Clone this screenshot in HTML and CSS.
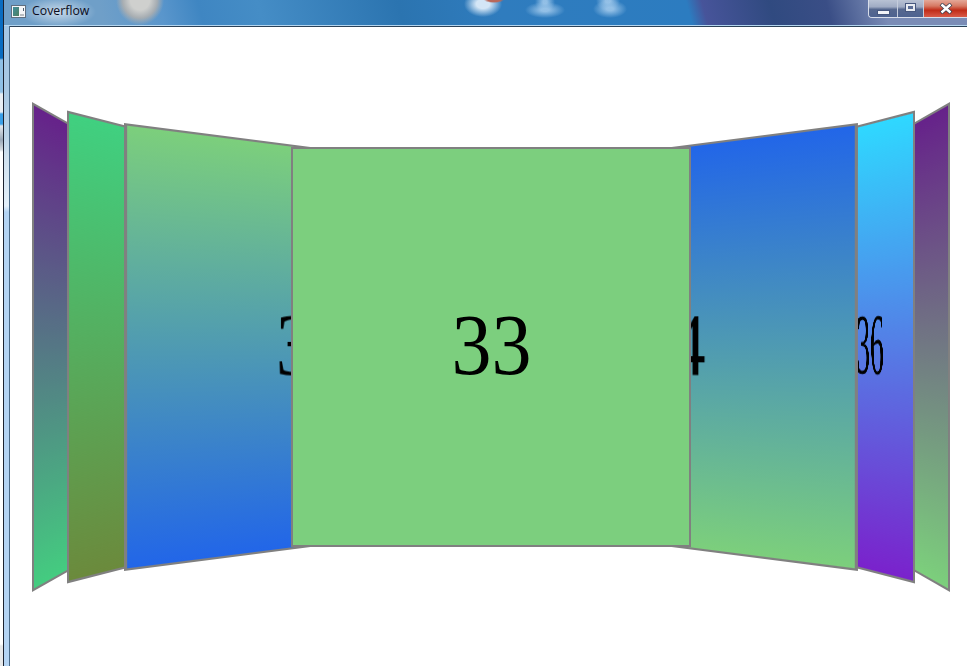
FILE: index.html
```html
<!DOCTYPE html>
<html lang="en">
<head>
    <meta charset="UTF-8">
    <meta name="viewport" content="width=device-width, initial-scale=1.0">
    <title>Coverflow</title>
    <link rel="stylesheet" href="styles.css">
</head>
<body>
    <div class="desktop-sliver"></div>
    <div class="window">
        <div class="titlebar">
            <svg class="title-icon" width="15" height="13" viewBox="0 0 15 13">
                <defs>
                    <linearGradient id="iconFill" x1="0" y1="0" x2="1" y2="1">
                        <stop offset="0" stop-color="#3f8f9f"/>
                        <stop offset="1" stop-color="#4f7f5f"/>
                    </linearGradient>
                </defs>
                <rect x="0.5" y="0.5" width="14" height="12" fill="#f4f6f8" stroke="#5f6f80"/>
                <rect x="2" y="2" width="6" height="9" fill="url(#iconFill)"/>
                <rect x="9" y="9" width="4" height="2" fill="#b8bcc0"/>
                <rect x="12" y="3" width="1" height="3" fill="#50606f"/>
            </svg>
            <span class="title-text">Coverflow</span>
            <div class="window-buttons">
                <div class="win-btn btn-min"><span class="min-glyph"></span></div>
                <div class="win-btn btn-max"><span class="max-glyph"></span></div>
                <div class="win-btn btn-close">
                    <svg width="14" height="11" viewBox="0 0 14 11">
                        <path d="M2 1 L12 10 M12 1 L2 10" stroke="#3a4050" stroke-width="4"/>
                        <path d="M2.500 1.500 L11.500 9.500 M11.500 1.500 L2.500 9.500" stroke="#ffffff" stroke-width="2.400"/>
                    </svg>
                </div>
            </div>
        </div>
        <div class="client">
            <div class="frame-edge"></div>
            <div class="content">
                <div class="cover cover-far-left"></div>
                <div class="cover cover-far-right"></div>
                <div class="cover cover-near-left"></div>
                <div class="cover cover-near-right"><span class="num num-squeezed">36</span></div>
                <div class="cover cover-side-left"><span class="num">32</span></div>
                <div class="cover cover-side-right"><span class="num">34</span></div>
                <div class="cover cover-center"><span class="num">33</span></div>
            </div>
        </div>
    </div>
</body>
</html>
```

FILE: styles.css
```css
html, body {
    margin: 0;
    padding: 0;
    height: 100%;
}
body {
    display: flex;
    overflow: hidden;
    background-color: #fff;
    font-family: "Open Sans", Arial, sans-serif;
}
.desktop-sliver {
    flex: 0 0 3px;
    border-right: 1px solid #1c2230;
    background: linear-gradient(180deg,
        #0a6cc0 0, #0a6cc0 58px, #8fc0e6 60px, #8fc0e6 92px, #e8eef4 94px, #e8eef4 112px,
        #3a9fe8 114px, #3a9fe8 124px, #e4e8ee 126px, #9aa8b8 140px, #d8dde2 150px,
        #ffffff 152px, #ffffff 644px, #e6e8ea 646px);
}
.window {
    flex: 1;
    display: flex;
    flex-direction: column;
    min-width: 0;
}

.titlebar {
    flex: 0 0 25px;
    display: flex;
    align-items: flex-start;
    position: relative;
    border-bottom: 1px solid #b4d6f0;
    background:
        radial-gradient(ellipse 38px 15px at 54px 12px, rgba(222, 232, 242, 0.8), rgba(222, 232, 242, 0)),
        radial-gradient(ellipse 10px 3px at 490px 0, #b8685a 60%, rgba(184, 104, 90, 0)),
        radial-gradient(ellipse 24px 25px at 136px 0, #cfd0ce 40%, rgba(190, 180, 170, 0.75) 72%, rgba(190, 190, 190, 0)),
        radial-gradient(ellipse 19px 13px at 479px 4px, #d4e6f6 35%, rgba(212, 230, 246, 0)),
        radial-gradient(ellipse 20px 8px at 541px 10px, rgba(156, 198, 234, 0.9) 20%, rgba(156, 198, 234, 0)),
        radial-gradient(ellipse 10px 10px at 541px 2px, rgba(156, 198, 234, 0.9) 20%, rgba(156, 198, 234, 0)),
        radial-gradient(ellipse 17px 9px at 606px 9px, rgba(156, 198, 234, 0.9) 20%, rgba(156, 198, 234, 0)),
        radial-gradient(ellipse 12px 10px at 604px 1px, rgba(156, 198, 234, 0.9) 20%, rgba(156, 198, 234, 0)),
        linear-gradient(75deg,
            #6f9fc8 0, #6f9fc8 97px, #5a96cc 155px, #3f86c2 193px, #458dc6 251px, #2b74b0 386px,
            #2f7cbe 483px, #2c7cc0 665px, #47549a 680px, #304a80 745px, #3a4e86 800px, #7a8cb6 855px, #7a8cb6 930px);
}
.title-icon {
    margin: 5px 0 0 7px;
}
.title-text {
    margin: 3px 0 0 6px;
    font-size: 12.3px;
    line-height: 16px;
    color: #0c0c1c;
}
.window-buttons {
    display: flex;
    margin-left: auto;
    height: 17px;
    border: 1px solid #d8deea;
    border-top: none;
    border-right: none;
    border-bottom-left-radius: 4px;
    overflow: hidden;
}
.win-btn {
    display: flex;
    align-items: center;
    justify-content: center;
    height: 17px;
    border-right: 1px solid #c4ccdc;
    background: linear-gradient(180deg, #b8c2d4 0, #a0acc4 40%, #56688f 55%, #4e6390 100%);
}
.btn-min {
    width: 28px;
}
.btn-max {
    width: 25px;
}
.btn-close {
    width: 43px;
    border-right: none;
    background: linear-gradient(180deg, #e4a898 0, #d67a64 35%, #c02c18 60%, #d85a48 100%);
}
.min-glyph {
    width: 11px;
    height: 3px;
    margin-top: 8px;
    background-color: #f2f4f8;
    border: 1px solid #47587f;
    box-sizing: content-box;
}
.max-glyph {
    width: 5px;
    height: 3px;
    margin-bottom: 3px;
    border: 2px solid #e8ecf2;
    outline: 1px solid #47587f;
    background-color: #5a6c95;
}

.client {
    flex: 1;
    display: flex;
    min-height: 0;
}
.frame-edge {
    flex: 0 0 5px;
    border-right: 1px solid #4a6a88;
    background: linear-gradient(180deg,
        #a4c6e4 0, #a8c8e4 60px, #bcd4e8 110px, #cfe0ee 130px, #e4f0fa 180px, #b4d4f4 186px, #b4d4f4 640px);
}
.content {
    flex: 1;
    position: relative;
    overflow: hidden;
    background-color: #fff;
    box-shadow: inset 0 1px 0 #2c4258;
}

/* covers on a free canvas: each matrix maps the square face onto its trapezium */
.cover {
    position: absolute;
    left: 0;
    top: 0;
    width: 398px;
    height: 398px;
    box-sizing: border-box;
    display: flex;
    align-items: center;
    justify-content: center;
    border: 2px solid #808080;
    transform-origin: 0 0;
}
.num {
    display: block;
    margin-bottom: 5px;
    font-family: "Liberation Serif", "Times New Roman", serif;
    font-size: 87px;
    line-height: 1;
    color: #000;
    transform: scaleX(0.92);
}
.num-squeezed {
    transform: scale(1.48, 0.885);
}
.cover-center {
    transform: translate(281px, 121px);
    width: 400px;
    height: 400px;
    background-color: #7ccf7e;
}
.cover-side-left {
    border-left-width: 3px;
    background: linear-gradient(180deg, #7ccf7c, #2266e8);
    transform: matrix3d(1.11558, 0.19357, 0, 0.000603, 0, 1.12563, 0, 0, 0, 0, 1, 0, 114, 97, 0, 1);
}
.cover-side-right {
    border-right-width: 3px;
    background: linear-gradient(180deg, #2266e8, #7ccf7c);
    transform: matrix3d(0.43191, -0.15609, 0, -0.000486, 0, 0.90779, 0, 0, 0, 0, 1, 0, 512, 140.35, 0, 1);
}
.cover-near-left {
    border-left-width: 8px;
    background: linear-gradient(180deg, #40d080, #6b8a3c);
    transform: matrix3d(0.25206, 0.08244, 0, 0.000257, 0, 1.18844, 0, 0, 0, 0, 1, 0, 57, 84.5, 0, 1);
}
.cover-near-right {
    border-right-width: 8px;
    background: linear-gradient(180deg, #2fd8ff, #7a22cc);
    transform: matrix3d(0.00199, -0.07485, 0, -0.0002332, 0, 1.07814, 0, 0, 0, 0, 1, 0, 820.2, 106.45, 0, 1);
}
.cover-far-left {
    border-left-width: 10px;
    background: linear-gradient(180deg, #66228a, #44cc80);
    transform: matrix3d(0.21618, 0.15269, 0, 0.0004757, 0, 1.23116, 0, 0, 0, 0, 1, 0, 22, 76, 0, 1);
}
.cover-far-right {
    border-right-width: 10px;
    background: linear-gradient(180deg, #66228a, #7ccf7c);
    transform: matrix3d(-0.20513, -0.12839, 0, -0.00039995, 0, 1.03518, 0, 0, 0, 0, 1, 0, 872, 115, 0, 1);
}
```
